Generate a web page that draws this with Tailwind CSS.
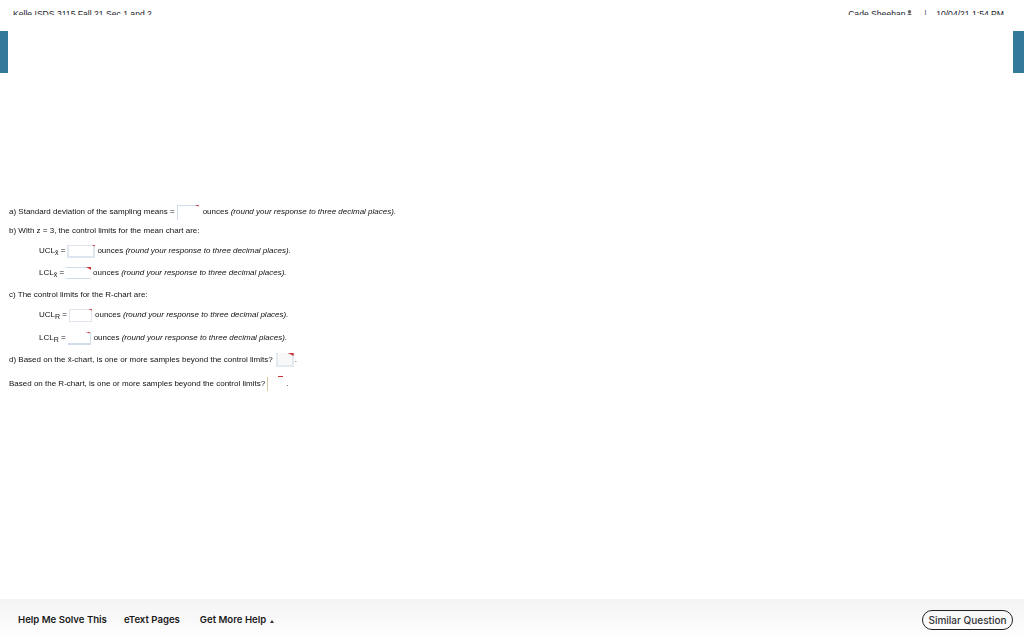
<!DOCTYPE html>
<html><head><meta charset="utf-8"><script src="https://cdn.jsdelivr.net/npm/@tailwindcss/browser@4"></script></head>
<body class="bg-white">
<div class="w-[1024px] h-[640px] overflow-hidden flex flex-col font-['Liberation_Sans',sans-serif] text-[#222]">
  <header class="h-[15px] shrink-0 overflow-hidden flex justify-between pl-[13px] pr-[20px] pt-[9px] text-[8.6px] leading-[11px] text-[#1a1a2a] whitespace-nowrap">
    <span>Kelle ISDS 3115 Fall 21 Sec 1 and 2</span>
    <span class="flex"><span class="w-[58px]">Cade Sheehan</span><svg class="mt-[1px] w-[7px] h-[6px]" viewBox="0 0 8 7"><circle cx="4" cy="2" r="2" fill="#666"/><path d="M0 7 Q4 2 8 7Z" fill="#666"/></svg><span class="ml-[11px] w-[3px] text-[#456]">|</span><span class="ml-[9px]">10/04/21 1:54 PM</span></span>
  </header>
  <div class="h-[16px] shrink-0"></div>
  <div class="h-[42px] shrink-0 flex justify-between"><div class="w-[8px] bg-[#337a99]"></div><div class="w-[11px] bg-[#337a99]"></div></div>
  <main class="h-[526px] shrink-0 pl-[9px] pt-[131px] text-[8px] blur-[0.35px] text-[#111] whitespace-nowrap">
    <div class="h-[16px] flex items-center">a) Standard deviation of the sampling means =<span class="ml-[2px] w-[22px] h-[15px] relative border-t border-l border-[#cfdcec]"><span class="absolute right-0 top-[-1px] w-[5px] h-[2px] bg-[#c33] [clip-path:polygon(0_0,100%_0,100%_100%)]"></span></span><span class="ml-[4px]">ounces <i>(round your response to three decimal places).</i></span></div>
    <div class="h-[16px] mt-[3px] flex items-center">b) With z = 3, the control limits for the mean chart are:</div>
    <div class="h-[16px] mt-[4px] flex items-center pl-[30px]"><span>UCL<sub class="text-[7px]">x̄</sub> =</span><span class="ml-[2px] w-[28px] h-[13px] relative border-2 border-t border-[#dfe6f0]"><span class="absolute right-[-2px] top-[-1px] w-[5px] h-[2px] bg-[#c33] [clip-path:polygon(0_0,100%_0,100%_100%)]"></span></span><span class="ml-[2px]">ounces <i>(round your response to three decimal places).</i></span></div>
    <div class="h-[16px] mt-[6px] flex items-center pl-[30px]"><span>LCL<sub class="text-[7px]">x̄</sub> =</span><span class="ml-[2px] w-[25px] h-[12px] relative border-t border-b border-[#cfdcec]"><span class="absolute right-0 top-[-1px] w-[5px] h-[3px] bg-[#c33] [clip-path:polygon(0_0,100%_0,100%_100%)]"></span></span><span class="ml-[2px]">ounces <i>(round your response to three decimal places).</i></span></div>
    <div class="h-[16px] mt-[6px] flex items-center">c) The control limits for the R-chart are:</div>
    <div class="h-[16px] mt-[4px] flex items-center pl-[30px]"><span>UCL<sub class="text-[7px]">R</sub> =</span><span class="ml-[2px] w-[23px] h-[13px] relative border border-[#dfe6f0]"><span class="absolute right-[-1px] top-[-1px] w-[5px] h-[2px] bg-[#c33] [clip-path:polygon(0_0,100%_0,100%_100%)]"></span></span><span class="ml-[3px]">ounces <i>(round your response to three decimal places).</i></span></div>
    <div class="h-[16px] mt-[7px] flex items-center pl-[30px]"><span>LCL<sub class="text-[7px]">R</sub> =</span><span class="ml-[2px] w-[23px] h-[13px] relative border-b-2 border-r border-[#cfdcec]"><span class="absolute right-0 top-0 w-[5px] h-[2px] bg-[#c33] [clip-path:polygon(0_0,100%_0,100%_100%)]"></span></span><span class="ml-[3px]">ounces <i>(round your response to three decimal places).</i></span></div>
    <div class="h-[16px] mt-[6px] flex items-center">d) Based on the x̄-chart, is one or more samples beyond the control limits?<span class="ml-[3px] w-[18px] h-[14px] relative border-2 border-t-0 border-[#e4eaf2] bg-[#f8f8f8]"><span class="absolute right-[-2px] top-0 w-[6px] h-[3px] bg-[#c33] [clip-path:polygon(0_0,100%_0,100%_100%)]"></span></span><span class="ml-[1px]">.</span></div>
    <div class="h-[16px] mt-[8px] flex items-center">Based on the R-chart, is one or more samples beyond the control limits?<span class="ml-[2px] w-[18px] h-[14px] relative border-l border-[#d8c8a8]"><span class="absolute right-[2px] top-[-1px] w-[5px] h-[1px] bg-[#c33]"></span></span><span class="ml-[1px]">.</span></div>
  </main>
  <footer class="h-[41px] shrink-0 flex items-center bg-gradient-to-b from-[#f3f3f3] to-white pl-[18px] pr-[11px] pt-[1px] text-[#1a1a1a] text-[9.6px] font-['Inter',sans-serif] font-semibold whitespace-nowrap">
    <span>Help Me Solve This</span>
    <span class="ml-[17px]">eText Pages</span>
    <span class="ml-[20px]">Get More Help</span>
    <svg class="ml-[4px] mt-[2px] w-[4px] h-[3px]" viewBox="0 0 4 3"><path d="M0 3 L2 0 L4 3Z" fill="#333"/></svg>
    <span class="ml-auto h-[20px] w-[91px] rounded-full border border-[#222] flex items-center justify-center font-medium text-[#333] text-[10px]">Similar Question</span>
  </footer>
</div>
</body></html>
